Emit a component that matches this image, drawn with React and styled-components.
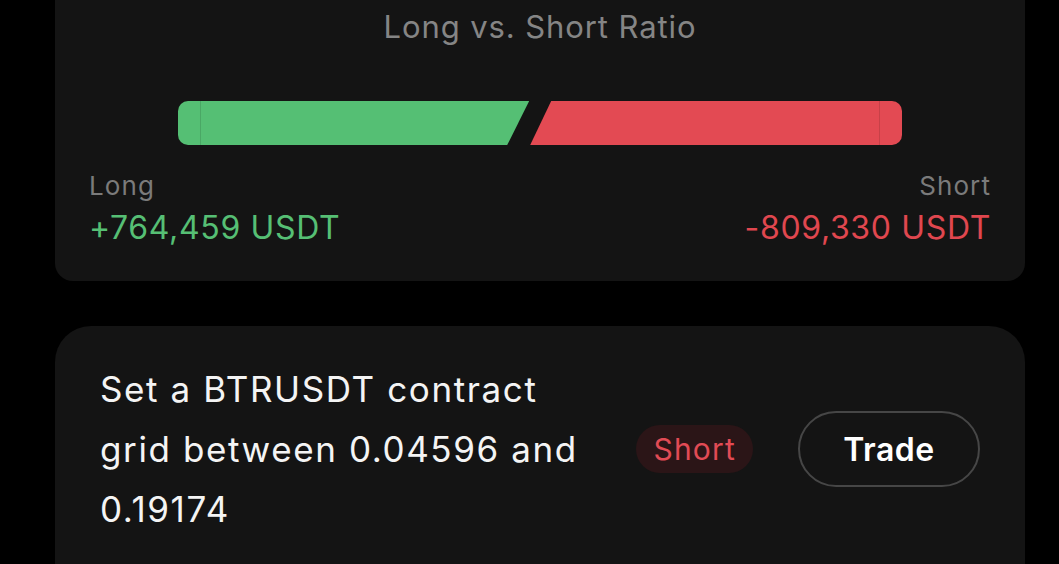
import React from "react";
import styled, { createGlobalStyle } from "styled-components";

const Global = createGlobalStyle`
  html, body { margin: 0; padding: 0; background: #000; }
  body { font-family: Inter, "Noto Sans", sans-serif; -webkit-font-smoothing: antialiased; }
`;

const Page = styled.div`
  width: 1059px;
  height: 564px;
  overflow: hidden;
  background: #000;
  display: flex;
  flex-direction: column;
  gap: 45px;
  padding: 0 34px 0 55px;
  box-sizing: border-box;
`;

const RatioCard = styled.section`
  margin-top: -40px;
  background: #141414;
  border-radius: 18px;
  padding: 48px 34px 34px;
  display: flex;
  flex-direction: column;
`;

const Title = styled.h2`
  margin: 0;
  text-align: center;
  font-size: 31px;
  letter-spacing: 0.9px;
  font-weight: 400;
  line-height: 38px;
  color: #858585;
`;

const Bar = styled.div`
  margin: 55px 89px 0;
  height: 44px;
  display: flex;
  gap: 1px;
`;

const Segment = styled.div`
  position: relative;
  height: 100%;
  background: ${(p) => (p.$side === "long" ? "#55bf74" : "#e34a53")};
  border-radius: ${(p) => (p.$side === "long" ? "10px 0 0 10px" : "0 10px 10px 0")};
  clip-path: ${(p) =>
    p.$side === "long"
      ? "polygon(0 0, 100% 0, calc(100% - 22px) 100%, 0 100%)"
      : "polygon(21px 0, 100% 0, 100% 100%, 0 100%)"};
  &::after {
    content: "";
    position: absolute;
    top: 0;
    bottom: 0;
    width: 1px;
    background: rgba(0, 0, 0, 0.12);
    ${(p) => (p.$side === "long" ? "left: 22px;" : "right: 22px;")}
  }
`;

const Stats = styled.div`
  margin-top: 25px;
  display: flex;
  justify-content: space-between;
`;

const Stat = styled.div`
  display: flex;
  flex-direction: column;
  align-items: ${(p) => (p.$align === "right" ? "flex-end" : "flex-start")};
`;

const StatLabel = styled.span`
  font-size: 26px;
  letter-spacing: 1.1px;
  line-height: 32px;
  color: #7b7b7b;
`;

const StatValue = styled.span`
  margin-top: 7px;
  font-size: 32px;
  letter-spacing: 0.65px;
  line-height: 38px;
  color: ${(p) => (p.$tone === "up" ? "#56bf74" : "#e0474f")};
`;

const GridCard = styled.section`
  background: #141414;
  border-radius: 36px;
  padding: 33px 45px 40px;
  min-height: 280px;
  display: flex;
  align-items: flex-start;
`;

const Row = styled.div`
  display: flex;
  align-items: center;
  width: 100%;
`;

const Description = styled.p`
  margin: 0;
  flex: 1;
  padding-right: 38px;
  font-size: 35px;
  letter-spacing: 1.6px;
  line-height: 60px;
  color: #f4f4f4;
`;

const Tag = styled.span`
  flex: none;
  height: 48px;
  padding: 0 17px;
  border-radius: 24px;
  background: #2b1517;
  color: #e14b55;
  font-size: 30px;
  letter-spacing: 1.2px;
  display: flex;
  align-items: center;
  margin-right: 45px;
`;

const TradeButton = styled.button`
  flex: none;
  width: 182px;
  height: 76px;
  border-radius: 38px;
  border: 2px solid #464646;
  background: transparent;
  color: #fff;
  font-family: inherit;
  font-size: 32px;
  letter-spacing: 0.5px;
  font-weight: 600;
  display: flex;
  align-items: center;
  justify-content: center;
`;

const longVal = 764459;
const shortVal = 809330;

export default function App() {
  return (
    <>
      <Global />
      <Page>
        <RatioCard>
          <Title>Long vs. Short Ratio</Title>
          <Bar>
            <Segment $side="long" style={{ flex: longVal }} />
            <Segment $side="short" style={{ flex: shortVal }} />
          </Bar>
          <Stats>
            <Stat>
              <StatLabel>Long</StatLabel>
              <StatValue $tone="up">+764,459 USDT</StatValue>
            </Stat>
            <Stat $align="right">
              <StatLabel>Short</StatLabel>
              <StatValue $tone="down">-809,330 USDT</StatValue>
            </Stat>
          </Stats>
        </RatioCard>
        <GridCard>
          <Row>
            <Description>
              Set a BTRUSDT contract grid between 0.04596 and 0.19174
            </Description>
            <Tag>Short</Tag>
            <TradeButton>Trade</TradeButton>
          </Row>
        </GridCard>
      </Page>
    </>
  );
}
